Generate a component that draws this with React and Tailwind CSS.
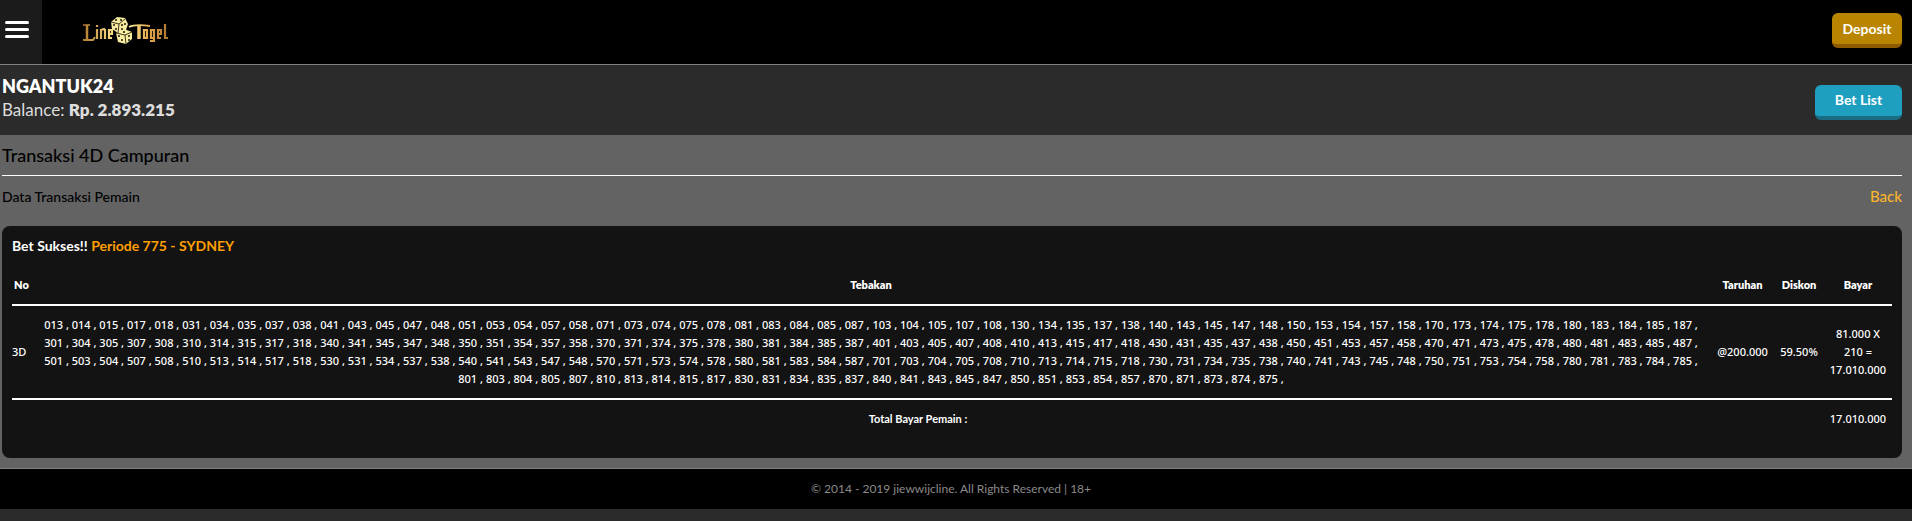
import React from "react";

const DIGITS = [0, 1, 3, 4, 5, 7, 8];

// every 3 digit combination without a repeated digit
const guesses = DIGITS.flatMap((a) =>
    DIGITS.flatMap((b) =>
        DIGITS.filter((c) => a !== b && b !== c && a !== c).map((c) => `${a}${b}${c}`)
    )
);

const bets = [
    {
        type: "3D",
        guesses,
        stake: "@200.000",
        discount: "59.50%",
        pay: "81.000 X 210 = 17.010.000",
    },
];

function Logo() {
    return (
        <svg viewBox="0 0 86 30" className="w-[86px] h-[30px]" role="img" aria-label="Line Togel">
            <defs>
                <linearGradient id="gold" gradientUnits="userSpaceOnUse" x1="0" y1="0" x2="86" y2="0">
                    <stop offset="0" stopColor="#b07a2c" />
                    <stop offset="0.3" stopColor="#f3d67c" />
                    <stop offset="0.55" stopColor="#f6e595" />
                    <stop offset="0.75" stopColor="#e6ab4e" />
                    <stop offset="1" stopColor="#a9752d" />
                </linearGradient>
            </defs>
            <g fill="none" stroke="url(#gold)" strokeWidth="2.2">
                {/* L */}
                <path d="M0 9h7" strokeWidth="1.5" />
                <path d="M4 9v14" strokeWidth="2.5" />
                <path d="M0 24h10l2-3" strokeWidth="1.8" />
                {/* i n e */}
                <path d="M14 13v10M14 9v2" />
                <path d="M18 23v-10M18 14l3-1 1 1v9" />
                <path d="M29 22h-3v-8h3v4h-3" />
                {/* T o g e l */}
                <path d="M46 11c6-3 14-2 21-1" strokeWidth="1.8" />
                <path d="M56 10v13" strokeWidth="3.5" />
                <path d="M61 14h3v8h-3z" />
                <path d="M71 22h-3v-8h3v11h-4" />
                <path d="M78 22h-3v-8h3v4h-3" />
                <path d="M82 8v14h3" />
            </g>
            <g fill="#f7eda0">
                <path d="M28 6l6-5 8 1 3 6-2 6-8 3-6-4z" />
                <path d="M33 17l8-4 8 3v7l-6 5-8-2z" />
            </g>
            <g fill="none" stroke="#2a2410" strokeWidth="0.9">
                <path d="M28 6l8 2 6-5M36 8l-1 9M33 17l9 2 7-3M42 19l1 9" />
            </g>
            <g fill="#1a1608">
                <circle cx="33" cy="4" r="1" />
                <circle cx="38" cy="4" r="1" />
                <circle cx="31" cy="9" r="1" />
                <circle cx="33" cy="13" r="1" />
                <circle cx="39" cy="9" r="1" />
                <circle cx="42" cy="8" r="1" />
                <circle cx="39" cy="13" r="1" />
                <circle cx="41" cy="16" r="1" />
                <circle cx="36" cy="20" r="1" />
                <circle cx="39" cy="24" r="1" />
                <circle cx="46" cy="20" r="1" />
                <circle cx="46" cy="24" r="1" />
            </g>
        </svg>
    );
}

function Header() {
    return (
        <header className="flex items-stretch h-[65px] bg-black border-b border-[#808080]">
            <button
                type="button"
                aria-label="Menu"
                className="flex flex-col gap-1 w-[42px] pl-[5px] pt-[21px] bg-[#1b1b1b] cursor-pointer"
            >
                <span className="w-6 h-[3px] rounded-full bg-white" />
                <span className="w-6 h-[3px] rounded-full bg-white" />
                <span className="w-6 h-[3px] rounded-full bg-white" />
            </button>
            <a href="#" className="ml-[41px] mt-4 self-start">
                <Logo />
            </a>
            <button
                type="button"
                className="ml-auto mr-[10px] mt-[13px] h-[35px] w-[70px] rounded-md border-b-4 border-[#8f5b00] bg-[#b98500] text-[14px] leading-5 font-bold cursor-pointer"
            >
                Deposit
            </button>
        </header>
    );
}

function UserBar({ name, balance }) {
    return (
        <section className="flex items-center justify-between h-[70px] pl-[2px] pr-[10px] bg-[#2b2b2b]">
            <div className="pb-1">
                <h1 className="text-[18px] leading-6 font-extrabold">{name}</h1>
                <p className="text-[17px] leading-6 text-[#dddddd]">
                    Balance: <b className="font-extrabold">{balance}</b>
                </p>
            </div>
            <button
                type="button"
                className="mt-1 h-[35px] w-[87px] rounded-md border-b-4 border-[#1a6c82] bg-[#1f9fc0] text-[14px] leading-5 font-bold cursor-pointer"
            >
                Bet List
            </button>
        </section>
    );
}

function BetTable({ bets, total }) {
    return (
        <table className="w-full table-fixed text-center text-[11px] leading-[18px]">
            <colgroup>
                <col className="w-[19px]" />
                <col />
                <col className="w-[63px]" />
                <col className="w-[50px]" />
                <col className="w-[68px]" />
            </colgroup>
            <thead>
                <tr className="border-b-2 border-white">
                    <th className="py-[10px] font-extrabold">No</th>
                    <th className="py-[10px] font-extrabold">Tebakan</th>
                    <th className="py-[10px] font-extrabold">Taruhan</th>
                    <th className="py-[10px] font-extrabold">Diskon</th>
                    <th className="py-[10px] font-extrabold">Bayar</th>
                </tr>
            </thead>
            <tbody className="font-['Noto_Sans',sans-serif] font-medium">
                {bets.map((bet) => (
                    <tr key={bet.type} className="border-b-2 border-white">
                        <td className="py-[10px] text-left">{bet.type}</td>
                        <td className="px-1 py-[10px]">{bet.guesses.map((guess) => `${guess}\u00a0, `)}</td>
                        <td className="py-[10px]">{bet.stake}</td>
                        <td className="py-[10px]">{bet.discount}</td>
                        <td className="px-1 py-[10px]">{bet.pay}</td>
                    </tr>
                ))}
                <tr>
                    <td colSpan={4} className="py-[10px] font-['Lato',sans-serif] font-bold">
                        Total Bayar Pemain :
                    </td>
                    <td className="py-[10px]">{total}</td>
                </tr>
            </tbody>
        </table>
    );
}

export default function App() {
    return (
        <div className="min-h-screen bg-[#2b2b2b] text-white font-['Lato',sans-serif]">
            <Header />
            <UserBar name="NGANTUK24" balance="Rp. 2.893.215" />
            <main className="pl-[2px] pr-[10px] pb-[10px] bg-[#636363]">
                <h2 className="h-[41px] leading-10 text-[18px] font-medium text-black border-b border-white">
                    Transaksi 4D Campuran
                </h2>
                <div className="flex items-center justify-between h-10 mb-[10px]">
                    <h3 className="text-[14px] font-medium text-black">Data Transaksi Pemain</h3>
                    <a href="#" className="text-[15px] font-medium text-[#fbb42c]">Back</a>
                </div>
                <section className="rounded-lg bg-[#131313] px-[10px] pt-[10px] pb-5">
                    <h4 className="mb-[10px] text-[14px] leading-5 font-bold">
                        Bet Sukses!! <span className="text-[#ff9f00]">Periode 775 - SYDNEY</span>
                    </h4>
                    <BetTable bets={bets} total="17.010.000" />
                </section>
            </main>
            <footer className="h-[41px] pr-[10px] border-t border-[#808080] bg-black text-center text-[12px] leading-10 text-[#8a8a8a]">
                © 2014 - 2019 jiewwijcline. All Rights Reserved | 18+
            </footer>
        </div>
    );
}
